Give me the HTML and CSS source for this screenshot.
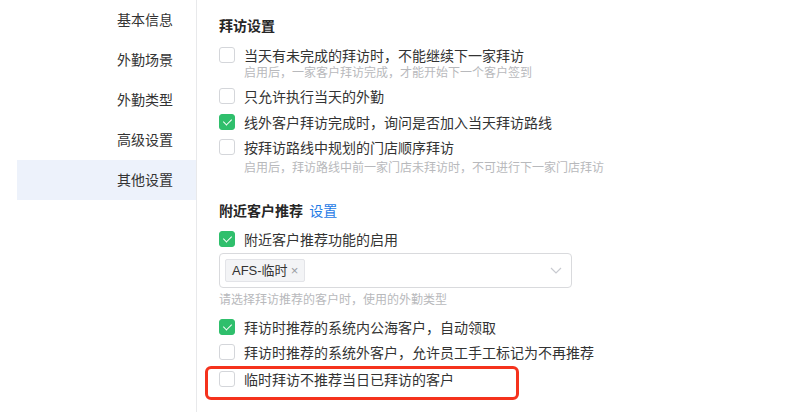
FILE: index.html
```html
<!DOCTYPE html>
<html lang="zh-CN">
  <head>
    <meta charset="UTF-8" />
    <meta name="viewport" content="width=device-width, initial-scale=1.0" />
    <title>其他设置</title>
    <link rel="stylesheet" href="styles.css">
  </head>
  <body>
    <aside>
      <ul class="menu">
        <li>基本信息</li>
        <li>外勤场景</li>
        <li>外勤类型</li>
        <li>高级设置</li>
        <li class="active">其他设置</li>
      </ul>
    </aside>
    <main>
      <section class="group">
        <h3>拜访设置</h3>
        <label class="option with-hint o1">
          <i class="box"></i>
          <div class="text">
            <span>当天有未完成的拜访时，不能继续下一家拜访</span>
            <small class="hint">启用后，一家客户拜访完成，才能开始下一个客户签到</small>
          </div>
        </label>
        <label class="option o2">
          <i class="box"></i>
          <div class="text"><span>只允许执行当天的外勤</span></div>
        </label>
        <label class="option o3">
          <i class="box checked"></i>
          <div class="text"><span>线外客户拜访完成时，询问是否加入当天拜访路线</span></div>
        </label>
        <label class="option with-hint o4">
          <i class="box"></i>
          <div class="text">
            <span>按拜访路线中规划的门店顺序拜访</span>
            <small class="hint loose">启用后，拜访路线中前一家门店未拜访时，不可进行下一家门店拜访</small>
          </div>
        </label>
      </section>

      <section class="group nearby">
        <h3>附近客户推荐 <a href="#">设置</a></h3>
        <label class="option">
          <i class="box checked"></i>
          <div class="text"><span>附近客户推荐功能的启用</span></div>
        </label>
        <div class="select">
          <span class="tag">AFS-临时<b>×</b></span>
          <svg class="arrow" width="12" height="7" viewBox="0 0 12 7">
            <path d="M1 1l5 5 5-5" fill="none" stroke="#c8cad0" stroke-width="1.2" />
          </svg>
        </div>
        <small class="hint tip">请选择拜访推荐的客户时，使用的外勤类型</small>
        <label class="option o5">
          <i class="box checked"></i>
          <div class="text"><span>拜访时推荐的系统内公海客户，自动领取</span></div>
        </label>
        <label class="option o6">
          <i class="box"></i>
          <div class="text"><span>拜访时推荐的系统外客户，允许员工手工标记为不再推荐</span></div>
        </label>
        <label class="option marked">
          <i class="box"></i>
          <div class="text"><span>临时拜访不推荐当日已拜访的客户</span></div>
        </label>
      </section>
    </main>
  </body>
</html>
```

FILE: styles.css
```css
body {
  margin: 0;
  font-family: "Noto Sans CJK SC", "Liberation Sans", sans-serif;
  font-size: 14px;
  color: #333;
  background: #fff;
  display: flex;
  height: 100vh;
  overflow: hidden;
}
aside {
  width: 196px;
  border-right: 1px solid #e8e9eb;
  flex-shrink: 0;
}
.menu {
  list-style: none;
  margin: 0;
  padding: 0 0 0 17px;
  li {
    height: 40px;
    line-height: 39px;
    text-align: right;
    padding-right: 23px;
    color: #333;
  }
  .active {
    background: #edf2fb;
  }
}
main {
  padding: 14px 0 0 22px;
  flex-grow: 1;
}
.group {
  h3 {
    margin: 0;
    font-size: 14px;
    font-weight: 600;
    line-height: 22px;
    color: #262626;
    a {
      font-weight: 400;
      color: #1f7be6;
      text-decoration: none;
      margin-left: 3px;
    }
  }
}
.nearby {
  margin-top: 25px;
}
.option {
  display: flex;
  align-items: flex-start;
  gap: 9px;
  margin-top: 7px;
  line-height: 22px;
  .text {
    display: flex;
    flex-direction: column;
  }
  &.with-hint {
    line-height: 20px;
    .box {
      margin-top: 2px;
    }
  }
}
.o1 { margin-top: 9px; }
.o2 { margin-top: 6px; }
.o3 { margin-top: 4px; }
.o4 { margin-top: 4px; }
.o5 { margin-top: 9px; }
.o6 { margin-top: 3px; }
.box {
  width: 16px;
  height: 16px;
  box-sizing: border-box;
  border: 1px solid #d4d6da;
  border-radius: 3px;
  margin-top: 3px;
  flex-shrink: 0;
  position: relative;
  &.checked {
    background: #2fbf6c;
    border-color: #2fbf6c;
    &::after {
      content: "";
      position: absolute;
      left: 4.5px;
      top: 2px;
      width: 4px;
      height: 7px;
      border: solid #fff;
      border-width: 0 1.5px 1.5px 0;
      transform: rotate(45deg);
    }
  }
}
.hint {
  font-size: 12px;
  line-height: 14px;
  color: #b8b9bc;
  &.loose {
    margin-top: 3px;
  }
  &.tip {
    display: block;
    line-height: 16px;
    margin-top: 3px;
  }
}
.select {
  width: 353px;
  height: 35px;
  box-sizing: border-box;
  margin-top: 3px;
  border: 1px solid #d9dadd;
  border-radius: 4px;
  display: flex;
  align-items: center;
  justify-content: space-between;
  padding: 0 9px 0 5px;
  .tag {
    height: 23px;
    line-height: 21px;
    box-sizing: border-box;
    padding: 0 6px;
    background: #f3f4f6;
    border: 1px solid #e3e4e8;
    border-radius: 2px;
    color: #333;
    font-size: 13px;
    font-family: "Liberation Sans", "Noto Sans CJK SC", sans-serif;
    b {
      font-weight: 400;
      color: #9a9ca3;
      font-size: 13px;
      margin-left: 3px;
    }
  }
}
.marked {
  width: 314px;
  height: 34px;
  box-sizing: border-box;
  margin: 3px 0 0 -14px;
  padding: 0 0 0 11px;
  border: 3px solid #f5321d;
  border-radius: 6px;
  line-height: 20px;
  .box {
    margin-top: 2px;
  }
}
```
